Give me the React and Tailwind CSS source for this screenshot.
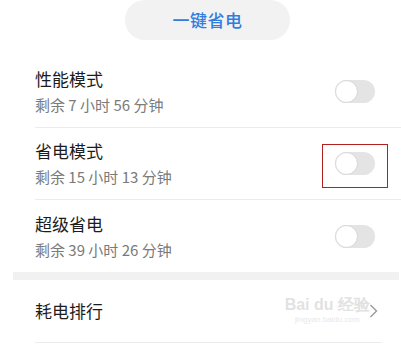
import React from "react";

const font = { fontFamily: '"Noto Sans CJK SC", "Noto Sans", sans-serif' };

function Toggle() {
  return (
    <div className="w-[40px] h-[23px] rounded-full bg-[#e4e4e4] flex items-center">
      <div className="w-[23px] h-[23px] rounded-full bg-white border border-[#d6d6d6]" />
    </div>
  );
}

function ModeRow({ title, sub, boxed, last }) {
  return (
    <div
      className={
        "h-[72px] flex items-center justify-between pr-[26px] " +
        (last ? "" : "border-b border-[#ececec]")
      }
    >
      <div className="flex flex-col">
        <span className="text-[17px] leading-[24px] text-[#1c1c1c]">{title}</span>
        <span className="text-[15px] leading-[22px] text-[#7a7a7a] mt-[3px]">{sub}</span>
      </div>
      <div className="relative">
        <Toggle />
        {boxed && (
          <div className="absolute left-[-13px] top-[-8px] w-[66px] h-[44px] border border-[#b32020]" />
        )}
      </div>
    </div>
  );
}

export default function App() {
  const modes = [
    { title: "性能模式", sub: "剩余 7 小时 56 分钟" },
    { title: "省电模式", sub: "剩余 15 小时 13 分钟", boxed: true },
    { title: "超级省电", sub: "剩余 39 小时 26 分钟", last: true },
  ];

  return (
    <div className="w-[401px] h-[351px] bg-white overflow-hidden" style={font}>
      {/* one-tap button */}
      <div className="flex justify-center pl-[14px]">
        <div className="w-[165px] h-[40px] rounded-full bg-[#f2f2f2] flex items-center justify-center">
          <span className="text-[17px] font-medium text-[#2f7ddf] tracking-[0.5px]">一键省电</span>
        </div>
      </div>

      {/* modes */}
      <div className="mt-[16px] ml-[35px]">
        {modes.map((m) => (
          <ModeRow key={m.title} {...m} />
        ))}
      </div>

      {/* section gap */}
      <div className="ml-[13px] mr-[2px] h-[8px] bg-[#f1f1f1]" />

      {/* ranking */}
      <div className="relative ml-[35px] mr-[19px] h-[63px] flex items-center justify-between border-b border-[#ececec]">
        <span className="text-[17px] text-[#1c1c1c]">耗电排行</span>
        <svg width="9" height="14" viewBox="0 0 9 14" className="mr-[4px]">
          <path d="M1.5 1 L7.5 7 L1.5 13" fill="none" stroke="#9a9a9a" strokeWidth="1.4" />
        </svg>
        <div className="absolute right-[12px] top-[16px] flex flex-col items-center opacity-30 pointer-events-none">
          <span className="text-[16px] leading-[18px] text-[#a0a0a0] font-bold" style={{ fontFamily: '"Liberation Sans", sans-serif' }}>
            Bai du 经验
          </span>
          <span className="text-[8px] leading-[11px] text-[#b0b0b0]" style={{ fontFamily: '"Liberation Sans", sans-serif' }}>
            jingyan.baidu.com
          </span>
        </div>
      </div>
    </div>
  );
}
